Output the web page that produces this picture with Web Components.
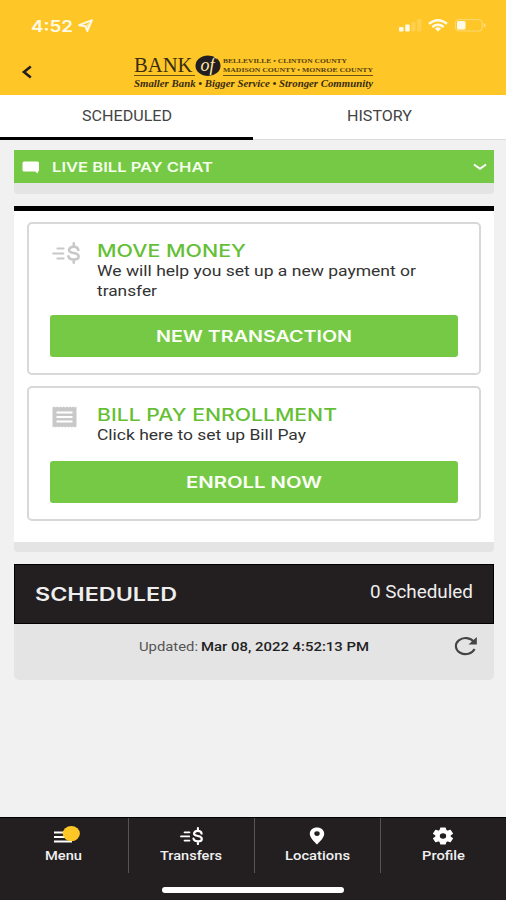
<!DOCTYPE html>
<html lang="en">
<head>
<meta charset="utf-8">
<title>Bill Pay</title>
<style>
html, body { margin: 0; height: 100%; background: #f1f1f1; }
body { font-family: Roboto, "Liberation Sans", sans-serif; overflow: hidden; }
</style>
</head>
<body>
<bank-app></bank-app>

<script>
/*
One line of text set to an exact width. The capitals sit in the vertical middle of the box.
attributes: text, w (width), h (line height), size, weight, color, face
*/
class WideText extends HTMLElement {
  constructor(){
    super();
    this.attachShadow({mode: 'open'});
  }

  connectedCallback(){
    const get = (name, fallback) => this.getAttribute(name) || fallback;
    const w = Number(get('w', 100));
    const h = Number(get('h', 18));
    const size = Number(get('size', 14));
    const base = h / 2 + size * 0.36;
    this.shadowRoot.innerHTML = `
    <style>
      :host { display: block; flex: none; width: ${w}px; height: ${h}px; }
      svg { display: block; overflow: visible; }
      text { font: ${get('weight', 400)} ${size}px ${get('face', 'Roboto')}, "Liberation Sans", sans-serif; fill: ${get('color', '#333')}; }
    </style>
    <svg width="${w}" height="${h}"><text x="0" y="${base}" textLength="${w}" lengthAdjust="spacingAndGlyphs">${get('text', '')}</text></svg>
    `;
  }
}

// all icons, drawn in the color of the parent
const ICONS = {
  plane: [16, 13, '<path d="M1.2 6.2 14 1.2 9.3 12 7.4 7.3Z" fill="none" stroke="currentColor" stroke-width="1.9" stroke-linejoin="round"/><path d="M8 6.5 14 1.2 9.4 12Z" fill="currentColor" opacity=".6"/>'],
  back: [12, 14, '<path d="M9.8 1.6 3 7l6.8 5.4" fill="none" stroke="currentColor" stroke-width="2.6"/>'],
  signal: [23, 13, '<g fill="currentColor"><rect x="0" y="8" width="4.5" height="4.4" rx="1"/><rect x="6.2" y="5.5" width="4.5" height="7" rx="1"/><rect x="12.3" y="3" width="4.3" height="9.5" rx="1" opacity=".2"/><rect x="18.2" y="0" width="4.3" height="12.5" rx="1" opacity=".2"/></g>'],
  wifi: [20, 13, '<g fill="none" stroke="currentColor" stroke-width="2.4"><path d="M1 4.8Q10-2.2 19 4.8"/><path d="M4.3 8Q10 3.6 15.7 8"/></g><path d="M6.8 9.4Q10 7.2 13.2 9.4L10 12.4Z" fill="currentColor"/>'],
  battery: [31, 13, '<rect x=".6" y=".6" width="26.5" height="11.4" rx="3" fill="none" stroke="currentColor" opacity=".4"/><rect x="2" y="2" width="8.5" height="8.6" rx="1.6" fill="currentColor"/><path d="M28.7 4v4.6Q30.6 7.7 30.6 6.3T28.7 4Z" fill="currentColor" opacity=".5"/>'],
  chat: [18, 13, '<path d="M2 .5h13.500Q17 .5 17 2v7Q17 10.500 16 10.500v2L13 10.500H2Q.5 10.500.5 9V2Q.5.5 2 .5Z" fill="currentColor"/>'],
  down: [14, 8, '<path d="M1 1.500 7 5.700 13 1.500" fill="none" stroke="currentColor" stroke-width="2"/>'],
  money: [28, 22, '<g fill="none" stroke="currentColor" stroke-width="2.200" stroke-linecap="round"><path d="M5.500 6.500h6M1.200 11.500h10M5.500 16.500h6"/><path stroke-width="2.600" d="M26.300 8Q25.800 4.800 21.800 4.800T17 7.900Q17 10.200 21.800 11T26.600 14.500Q26.600 17.500 21.800 17.500T16.400 14.200M21.800 1.300v3.500M21.800 17.700v3"/></g>'],
  receipt: [26, 22, '<path d="M.5 1.500l1.600-1 1.600 1 1.600-1 1.600 1 1.600-1 1.600 1 1.600-1 1.600 1 1.600-1 1.600 1 1.600-1 1.600 1 1.600-1 1.600 1 1.600-1V20.500l-1.600 1-1.600-1-1.600 1-1.600-1-1.600 1-1.600-1-1.600 1-1.600-1-1.600 1-1.600-1-1.600 1-1.600-1-1.600 1-1.600-1-1.600 1Z" fill="currentColor"/><path d="M4.500 6.500h16M4.500 11h16M4.500 15.500h16" stroke="#fff" stroke-width="1.900"/>'],
  reload: [24, 20, '<path d="M19.800 5.800A9.700 8 0 1 0 20.600 13" fill="none" stroke="currentColor" stroke-width="2.100"/><path d="M22.800 1V8.600H14.500Z" fill="currentColor"/>'],
  menu: [28, 20, '<path d="M2 6.500h18M2 11h18M2 15.500h18" stroke="currentColor" stroke-width="2.100"/><ellipse cx="19.300" cy="7.600" rx="8.600" ry="7.600" fill="#ffc627"/>'],
  pin: [16, 18, '<path fill-rule="evenodd" d="M8 .5C3.800.500.800 3.200.800 6.700.800 11 5.500 14.500 8 17.500 10.500 14.500 15.200 11 15.200 6.700 15.200 3.200 12.200.500 8 .500ZM8 4.300A2.700 2.300 0 1 1 8 8.900 2.700 2.300 0 1 1 8 4.300Z" fill="currentColor"/>'],
  gear: [22, 18, '<g transform="translate(11 9) scale(1.100 .950)"><path d="M-2 -8.500H2L2.700-5.900 4.200-5 6.600-6 8.600-2.600 6.500-.900V.900L8.600 2.600 6.600 6 4.200 5 2.700 5.900 2 8.500H-2L-2.700 5.900-4.200 5-6.600 6-8.600 2.600-6.500.900V-.900L-8.600-2.600-6.600-6-4.200-5-2.700-5.900Z" fill="currentColor" stroke="currentColor" stroke-linejoin="round"/><circle r="2.900" fill="#231f20"/></g>']
};

class AppIcon extends HTMLElement {
  constructor(){
    super();
    this.attachShadow({mode: 'open'});
  }

  connectedCallback(){
    const [w, h, body] = ICONS[this.getAttribute('name')];
    const width = Number(this.getAttribute('w')) || w;
    const height = width * h / w;
    this.shadowRoot.innerHTML = `
    <style>
      :host { display: block; flex: none; width: ${width}px; height: ${height}px; }
      svg { display: block; }
    </style>
    <svg width="${width}" height="${height}" viewBox="0 0 ${w} ${h}">${body}</svg>
    `;
  }
}

//bank name, counties and motto
class BankLogo extends HTMLElement {
  constructor(){
    super();
    this.attachShadow({mode: 'open'});
  }

  connectedCallback(){
    this.shadowRoot.innerHTML = `
    <style>
      :host { display: block; width: 240px; height: 36px; }
      svg { display: block; overflow: visible; }
      text { font-family: "Liberation Serif", serif; fill: #3a2c10; }
      .name { font-size: 20px; }
      .of { font-size: 18px; font-style: italic; fill: #ffe9a8; }
      .small { font-size: 7px; font-weight: bold; fill: #54400f; }
      .motto { font-size: 9.500px; font-style: italic; font-weight: bold; }
    </style>
    <svg width="240" height="36">
      <text class="name" x="0" y="16.500" textLength="58.500" lengthAdjust="spacingAndGlyphs">BANK</text>
      <ellipse cx="74" cy="10.700" rx="12.500" ry="10.200" fill="#231f20"/>
      <text class="of" x="66.500" y="15.500" textLength="14" lengthAdjust="spacingAndGlyphs">of</text>
      <text class="small" x="89" y="8.200" textLength="124" lengthAdjust="spacingAndGlyphs">BELLEVILLE • CLINTON COUNTY</text>
      <text class="small" x="89" y="16.500" textLength="150" lengthAdjust="spacingAndGlyphs">MADISON COUNTY • MONROE COUNTY</text>
      <path d="M0 20.500h61M89 20.500h150" stroke="#6b500f"/>
      <text class="motto" x="0" y="31.500" textLength="239" lengthAdjust="spacingAndGlyphs">Smaller Bank • Bigger Service • Stronger Community</text>
    </svg>
    `;
  }
}

//yellow top with the phone status and the logo
class AppHeader extends HTMLElement {
  constructor(){
    super();
    this.attachShadow({mode: 'open'});
  }

  connectedCallback(){
    this.shadowRoot.innerHTML = `
    <style>
      :host { display: block; height: 95px; background: #ffc627; }
      .status { display: flex; align-items: center; height: 51px; padding: 0 20px 0 31px; color: #fffbe8; box-sizing: border-box; }
      .status app-icon[name="plane"] { margin: 0 auto 0 5px; }
      .status app-icon[name="wifi"] { margin: 0 7px 0 6px; }
      .brand { display: flex; align-items: flex-start; padding: 4px 0 0 21px; color: #231f20; }
      .brand app-icon { margin: 10px 101px 0 0; }
    </style>
    <div class="status">
      <wide-text text="4:52" w="42" h="20" size="16" weight="600" face="Inter" color="#fffbe8"></wide-text>
      <app-icon name="plane"></app-icon>
      <app-icon name="signal"></app-icon>
      <app-icon name="wifi"></app-icon>
      <app-icon name="battery"></app-icon>
    </div>
    <div class="brand"><app-icon name="back"></app-icon><bank-logo></bank-logo></div>
    `;
  }
}

class TabBar extends HTMLElement {
  constructor(){
    super();
    this.attachShadow({mode: 'open'});
  }

  connectedCallback(){
    this.shadowRoot.innerHTML = `
    <style>
      :host { display: flex; height: 44.500px; background: #fff; }
      div { flex: 1; display: flex; justify-content: center; padding-top: 10.500px; border-bottom: 1px solid #ddd; box-sizing: border-box; }
      .active { border-bottom: 3.500px solid #000; }
    </style>
    <div class="active"><wide-text text="SCHEDULED" w="90" h="19" size="14" color="#444"></wide-text></div>
    <div><wide-text text="HISTORY" w="65" h="19" size="14" color="#444"></wide-text></div>
    `;
  }
}

//bordered card, head is passed with slots and the button label by attribute
class ActionCard extends HTMLElement {
  constructor(){
    super();
    this.attachShadow({mode: 'open'});
  }

  connectedCallback(){
    this.shadowRoot.innerHTML = `
    <style>
      :host { display: block; box-sizing: border-box; border: 2px solid #d8d8d8; border-radius: 5px; padding: 17.500px 20.500px 0; background: #fff; }
      .head { display: flex; }
      .icon { width: 47.500px; padding: 1px 0 0 2.500px; box-sizing: border-box; color: #c8c8c8; }
      .button { display: flex; align-items: center; justify-content: center; height: 42px; margin-top: var(--gap); background: #76c945; border-radius: 3px; }
    </style>
    <div class="head">
      <div class="icon"><slot name="icon"></slot></div>
      <div><slot></slot></div>
    </div>
    <div class="button">
      <wide-text text="${this.getAttribute('label')}" w="${this.getAttribute('label-width')}" h="20" size="15.800" weight="600" face="Inter" color="#fbfff7"></wide-text>
    </div>
    `;
  }
}

class NavItem extends HTMLElement {
  constructor(){
    super();
    this.attachShadow({mode: 'open'});
  }

  connectedCallback(){
    this.shadowRoot.innerHTML = `
    <style>
      :host { flex: 1; display: flex; flex-direction: column; align-items: center; box-sizing: border-box; height: 55px; color: #fff; }
      .icon { display: flex; align-items: center; justify-content: center; height: 20px; margin: 8px 0 1px; }
      app-icon[name="menu"] { margin-left: 4px; }
    </style>
    <div class="icon"><app-icon name="${this.getAttribute('icon')}" w="${this.getAttribute('icon-width')}"></app-icon></div>
    <wide-text text="${this.getAttribute('label')}" w="${this.getAttribute('label-width')}" h="17" size="12.800" weight="500" color="#f0f0f0"></wide-text>
    `;
  }
}

class BottomNav extends HTMLElement {
  constructor(){
    super();
    this.attachShadow({mode: 'open'});
  }

  connectedCallback(){
    this.shadowRoot.innerHTML = `
    <style>
      :host { display: block; box-sizing: border-box; height: 83px; background: #231f20; border-top: 1.500px solid #000; }
      .items { display: flex; }
      nav-item { border-left: 1px solid #575455; }
      nav-item:first-child { flex: none; width: 127.500px; border-left: 0; }
      .home { width: 182px; height: 6px; margin: 14px auto 0; border-radius: 3px; background: #fff; }
    </style>
    <div class="items">
      <nav-item icon="menu" icon-width="28" label="Menu" label-width="37"></nav-item>
      <nav-item icon="money" icon-width="23" label="Transfers" label-width="62"></nav-item>
      <nav-item icon="pin" icon-width="16" label="Locations" label-width="65"></nav-item>
      <nav-item icon="gear" icon-width="22" label="Profile" label-width="43"></nav-item>
    </div>
    <div class="home"></div>
    `;
  }
}

class BankApp extends HTMLElement {
  constructor(){
    super();
    this.attachShadow({mode: 'open'});
  }

  connectedCallback(){
    this.shadowRoot.innerHTML = `
    <style>
      :host { display: flex; flex-direction: column; width: 506px; height: 900px; background: #f1f1f1; }
      main { flex: 1; padding: 10.500px 12.500px 0 14px; }
      .chat { display: flex; align-items: center; height: 33px; padding: 0 7px 0 8px; background: #76c945; color: #fff; }
      .chat app-icon[name="chat"] { margin: 1px 12px 0 0; }
      .chat app-icon[name="down"] { margin-left: auto; }
      .shade { height: 10.500px; background: #e4e4e4; border-radius: 0 0 4px 4px; }
      .panel { margin-top: 12px; border-top: 5.500px solid #000; background: #fff; padding: 11px 13px 21px; }
      .first { height: 153px; margin-bottom: 11px; --gap: 15.500px; }
      .second { height: 135px; --gap: 15.500px; }
      .bar { display: flex; justify-content: space-between; height: 60px; margin-top: 12px; padding: 0 19.500px; box-sizing: border-box; border: 1.500px solid #000; background: #231f20; }
      .bar .title { margin-top: 19.500px; }
      .bar .count { margin-top: 16.500px; }
      .updated { display: flex; align-items: flex-start; height: 55.500px; padding: 11px 15.500px 0 124.500px; box-sizing: border-box; background: #e4e4e4; border-radius: 0 0 5px 5px; color: #444; }
      .updated wide-text { margin: 1px 3.500px 0 0; }
      .updated app-icon { margin: 1px 0 0 auto; }
    </style>
    <app-header></app-header>
    <tab-bar></tab-bar>
    <main>
      <div class="chat">
        <app-icon name="chat"></app-icon>
        <wide-text text="LIVE BILL PAY CHAT" w="161" h="20" size="13.500" weight="600" face="Inter" color="#f4ffec"></wide-text>
        <app-icon name="down"></app-icon>
      </div>
      <div class="shade"></div>
      <div class="panel">
        <action-card class="first" label="NEW TRANSACTION" label-width="196">
          <app-icon slot="icon" name="money"></app-icon>
          <wide-text text="MOVE MONEY" w="149" h="19" size="17" weight="500" face="Inter" color="#65bf35"></wide-text>
          <wide-text text="We will help you set up a new payment or" w="319" h="21.500" size="14.500" color="#333"></wide-text>
          <wide-text text="transfer" w="60" h="17.500" size="14.500" color="#333"></wide-text>
        </action-card>
        <action-card class="second" label="ENROLL NOW" label-width="136">
          <app-icon slot="icon" name="receipt"></app-icon>
          <wide-text text="BILL PAY ENROLLMENT" w="240" h="19" size="17" weight="500" face="Inter" color="#65bf35"></wide-text>
          <wide-text text="Click here to set up Bill Pay" w="209" h="21.500" size="14.500" color="#333"></wide-text>
        </action-card>
      </div>
      <div class="shade"></div>
      <div class="bar">
        <wide-text class="title" text="SCHEDULED" w="142" h="20" size="18" weight="600" face="Inter" color="#eee"></wide-text>
        <wide-text class="count" text="0 Scheduled" w="103" h="20" size="17.500" color="#eee"></wide-text>
      </div>
      <div class="updated">
        <wide-text text="Updated:" w="59" h="20" size="13" color="#555"></wide-text>
        <wide-text text="Mar 08, 2022 4:52:13 PM" w="168" h="20" size="13" weight="500" color="#222"></wide-text>
        <app-icon name="reload"></app-icon>
      </div>
    </main>
    <bottom-nav></bottom-nav>
    `;
  }
}

//Register custom elements with the browser
customElements.define('wide-text', WideText);
customElements.define('app-icon', AppIcon);
customElements.define('bank-logo', BankLogo);
customElements.define('app-header', AppHeader);
customElements.define('tab-bar', TabBar);
customElements.define('action-card', ActionCard);
customElements.define('nav-item', NavItem);
customElements.define('bottom-nav', BottomNav);
customElements.define('bank-app', BankApp);
</script>
</body>
</html>
